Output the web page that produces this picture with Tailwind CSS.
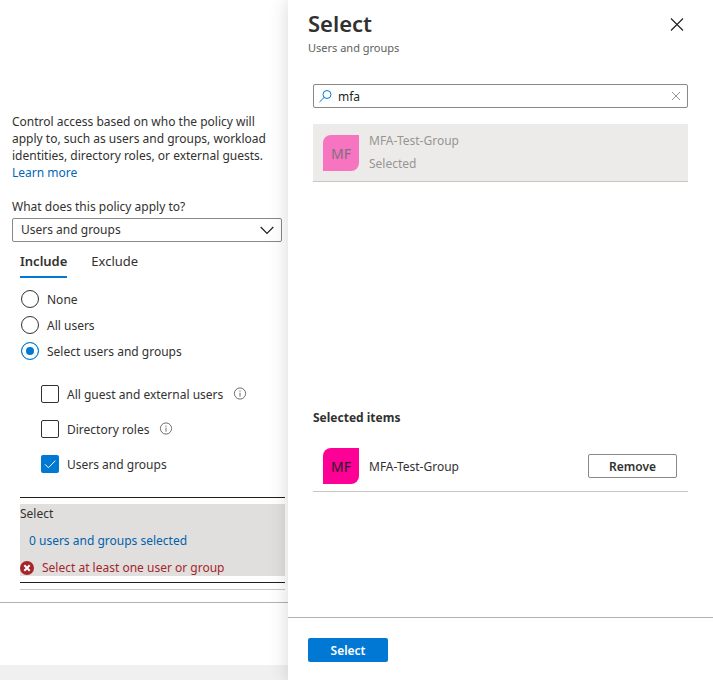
<!DOCTYPE html>
<html lang="en">
<head>
<meta charset="utf-8">
<meta name="viewport" content="width=device-width, initial-scale=1">
<title>Select users and groups</title>
<script src="https://cdn.jsdelivr.net/npm/@tailwindcss/browser@4"></script>
</head>
<body class="flex min-h-screen bg-white font-['Segoe_UI','Noto_Sans',sans-serif] text-[12px] leading-[17px] text-[#323130]">

<main class="flex w-72 shrink-0 flex-col">
  <div class="flex-1 pt-[113px]">
    <div class="pr-1.5 pl-3">
      <p class="whitespace-nowrap">Control access based on who the policy will<br>apply to, such as users and groups, workload<br>identities, directory roles, or external guests.<br><a href="#" class="text-[#0067b8]">Learn more</a></p>
      <label for="scope" class="mt-4 block pt-px">What does this policy apply to?</label>
      <div class="relative mt-[3px]">
        <select id="scope" class="block h-6 w-full appearance-none rounded-[2px] border border-[#8a8886] bg-white pl-2 leading-[22px]">
          <option>Users and groups</option>
        </select>
        <svg class="pointer-events-none absolute top-2 right-2" width="14" height="9" viewBox="0 0 14 9" fill="none" stroke="#201f1e" stroke-width="1.2" aria-hidden="true"><path d="M.7 1 7 7.300 13.300 1"/></svg>
      </div>
    </div>

    <div role="tablist" class="flex gap-6 pt-[11px] pl-5 text-[13px]">
      <button role="tab" aria-selected="true" class="border-b-2 border-[#0078d4] pb-1.5 font-semibold">Include</button>
      <button role="tab" aria-selected="false" class="border-b-2 border-transparent pb-1.5">Exclude</button>
    </div>

    <fieldset class="flex flex-col gap-2 pt-3 pl-[21px]">
      <label class="flex items-center gap-2"><input type="radio" name="users" class="size-[18px] appearance-none rounded-full border border-[#323130]">None</label>
      <label class="flex items-center gap-2"><input type="radio" name="users" class="size-[18px] appearance-none rounded-full border border-[#323130]">All users</label>
      <label class="flex items-center gap-2"><input type="radio" name="users" checked class="size-[18px] appearance-none rounded-full border border-[#0078d4] bg-[#0078d4] shadow-[inset_0_0_0_4px_white]">Select users and groups</label>
    </fieldset>

    <div class="flex flex-col gap-[17px] pt-[25px] pl-[41px]">
      <div class="flex items-center gap-2.5">
        <label class="flex items-center gap-2"><input type="checkbox" class="size-[18px] appearance-none rounded-[2px] border border-[#323130]">All guest and external users</label>
        <svg width="14" height="14" viewBox="0 0 14 14" fill="none" stroke="#706e6c" aria-hidden="true"><circle cx="7" cy="6.500" r="5.600"/><path d="M7 5.700v4M7 3.500v1.200"/></svg>
      </div>
      <div class="flex items-center gap-2.5">
        <label class="flex items-center gap-2"><input type="checkbox" class="size-[18px] appearance-none rounded-[2px] border border-[#323130]">Directory roles</label>
        <svg width="14" height="14" viewBox="0 0 14 14" fill="none" stroke="#706e6c" aria-hidden="true"><circle cx="7" cy="6.500" r="5.600"/><path d="M7 5.700v4M7 3.500v1.200"/></svg>
      </div>
      <label class="flex items-center gap-2">
        <span class="relative flex"><input type="checkbox" checked class="size-[18px] appearance-none rounded-[2px] bg-[#0078d4]"><svg class="pointer-events-none absolute inset-0" width="18" height="18" viewBox="0 0 18 18" fill="none" stroke="#fff" aria-hidden="true"><path d="m4 9.300 3.400 3.400 7-7"/></svg></span>Users and groups</label>
    </div>

    <div class="mt-6 mr-[3px] ml-5 border-b border-[#c8c6c4] pb-1.5">
      <section class="border-y border-[#201f1e] py-1.5">
        <div class="flex flex-col gap-2.5 bg-[#e1dfdd] pt-px whitespace-nowrap">
          <h2>Select</h2>
          <a href="#" class="pl-[9px] text-[#0062ad]">0 users and groups selected</a>
          <p class="flex items-center gap-2 text-[#a4262c]">
            <svg width="14" height="14" viewBox="0 0 14 14" aria-hidden="true"><circle cx="7" cy="7" r="7" fill="#a4262c"/><path d="m4.300 4.300 5.400 5.400m0-5.400-5.400 5.400" stroke="#fff" stroke-width="2"/></svg>Select at least one user or group</p>
        </div>
      </section>
    </div>
  </div>
  <footer class="flex h-[78px] flex-col justify-end border-t border-[#b3b0ad]"><div class="h-[15px] bg-[#f0f0f0]"></div></footer>
</main>

<aside class="relative flex min-w-0 flex-1 flex-col bg-white shadow-[0_0_18px_rgba(0,0,0,0.16)]">
  <header class="flex items-start justify-between pt-2 pr-[29px] pl-5">
    <div>
      <h1 class="text-[22px] leading-[30px] font-semibold">Select</h1>
      <p class="mt-0.5 text-[11px] leading-4 text-[#605e5c]">Users and groups</p>
    </div>
    <button aria-label="Close" class="mt-2.5"><svg width="14" height="13" viewBox="0 0 14 13" fill="none" stroke="#201f1e" stroke-width="1.100" aria-hidden="true"><path d="m1 .5 12 12M13 .5l-12 12"/></svg></button>
  </header>

  <div class="flex-1 px-[25px] pt-7">
    <div class="flex h-6 items-center gap-1.5 rounded-[2px] border border-[#8a8886] px-[5px]">
      <svg width="13" height="13" viewBox="0 0 13 13" fill="none" stroke="#0078d4" stroke-width="1" aria-hidden="true"><circle cx="8" cy="4.500" r="4"/><path d="M5.200 7.400.5 12"/></svg>
      <input type="text" value="mfa" aria-label="Search" class="min-w-0 flex-1 text-[#201f1e] outline-none">
      <button aria-label="Clear search" class="pr-0.5"><svg width="8" height="8" viewBox="0 0 8 8" fill="none" stroke="#8a8886" stroke-width=".9" aria-hidden="true"><path d="m0 0 8 8M8 0 0 8"/></svg></button>
    </div>

    <div class="mt-4 min-h-[285px]">
      <div class="flex gap-2.5 border-b border-[#c8c6c4] bg-[#edebe9] px-2.5 pt-2 pb-[9px] text-[#979593]">
        <span class="mt-[3px] flex size-9 items-center justify-center rounded-tl-lg rounded-br-lg bg-[#f774c1] text-[14px] text-[#7e7080]">MF</span>
        <div class="flex flex-col gap-1.5"><p>MFA-Test-Group</p><p>Selected</p></div>
      </div>
    </div>

    <h2 class="font-bold">Selected items</h2>
    <div class="mt-[15px] flex items-center gap-2.5 border-b border-[#c8c6c4] pt-[7px] pr-[11px] pb-[7px] pl-2.5">
      <span class="flex size-9 items-center justify-center rounded-tl-lg rounded-br-lg bg-[#ff0097] text-[14px] text-[#201f1e]">MF</span>
      <p class="flex-1">MFA-Test-Group</p>
      <button class="h-6 w-[89px] rounded-[2px] border border-[#8a8886] font-semibold">Remove</button>
    </div>
  </div>

  <footer class="border-t border-[#b3b0ad] px-5 pt-5 pb-[18px]">
    <button class="block h-6 w-20 rounded-[2px] bg-[#0078d4] font-semibold text-white">Select</button>
  </footer>
</aside>

</body>
</html>
